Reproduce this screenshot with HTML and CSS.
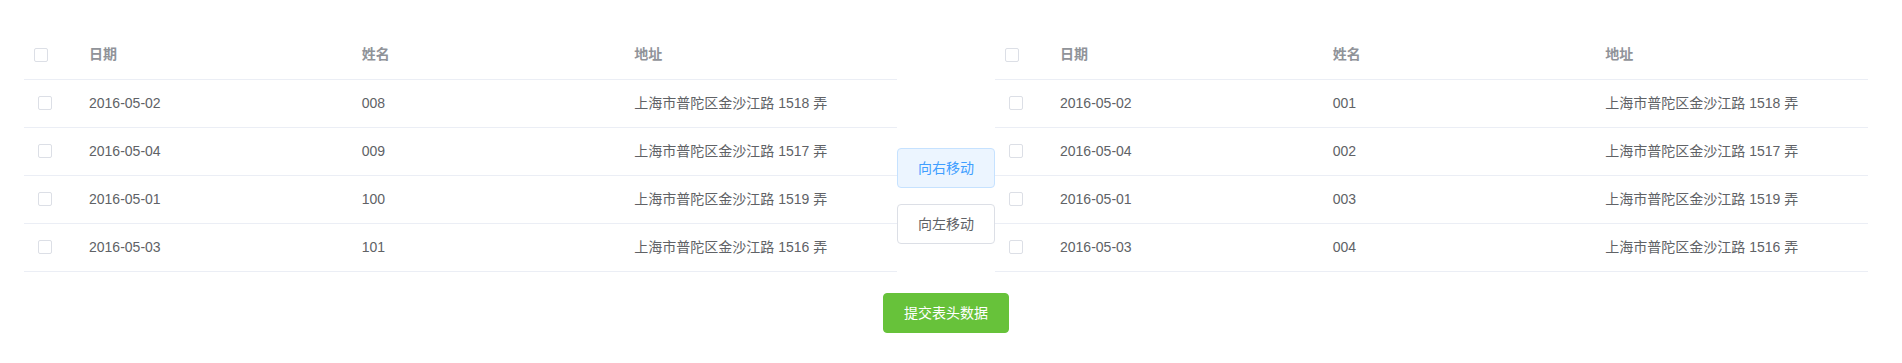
FILE: index.html
```html
<!DOCTYPE html>
<html lang="zh-CN">
<head>
<meta charset="utf-8">
<title>表格穿梭</title>
<link rel="stylesheet" href="styles.css">
</head>
<body>
<div class="page">
  <div class="transfer">
    <div class="pane">
      <table class="grid">
        <colgroup><col class="c-sel"><col class="c-col"><col class="c-col"><col class="c-col"></colgroup>
        <thead>
          <tr><th class="sel"><span class="cb"></span></th><th>日期</th><th>姓名</th><th>地址</th></tr>
        </thead>
        <tbody>
          <tr><td class="sel"><span class="cb"></span></td><td>2016-05-02</td><td>008</td><td>上海市普陀区金沙江路 1518 弄</td></tr>
          <tr><td class="sel"><span class="cb"></span></td><td>2016-05-04</td><td>009</td><td>上海市普陀区金沙江路 1517 弄</td></tr>
          <tr><td class="sel"><span class="cb"></span></td><td>2016-05-01</td><td>100</td><td>上海市普陀区金沙江路 1519 弄</td></tr>
          <tr><td class="sel"><span class="cb"></span></td><td>2016-05-03</td><td>101</td><td>上海市普陀区金沙江路 1516 弄</td></tr>
        </tbody>
      </table>
    </div>
    <div class="ops">
      <button class="btn btn-active">向右移动</button>
      <button class="btn">向左移动</button>
    </div>
    <div class="pane">
      <table class="grid">
        <colgroup><col class="c-sel"><col class="c-col"><col class="c-col"><col class="c-col"></colgroup>
        <thead>
          <tr><th class="sel"><span class="cb"></span></th><th>日期</th><th>姓名</th><th>地址</th></tr>
        </thead>
        <tbody>
          <tr><td class="sel"><span class="cb"></span></td><td>2016-05-02</td><td>001</td><td>上海市普陀区金沙江路 1518 弄</td></tr>
          <tr><td class="sel"><span class="cb"></span></td><td>2016-05-04</td><td>002</td><td>上海市普陀区金沙江路 1517 弄</td></tr>
          <tr><td class="sel"><span class="cb"></span></td><td>2016-05-01</td><td>003</td><td>上海市普陀区金沙江路 1519 弄</td></tr>
          <tr><td class="sel"><span class="cb"></span></td><td>2016-05-03</td><td>004</td><td>上海市普陀区金沙江路 1516 弄</td></tr>
        </tbody>
      </table>
    </div>
  </div>
  <div class="footer">
    <button class="btn btn-success">提交表头数据</button>
  </div>
</div>
</body>
</html>
```

FILE: styles.css
```css
* { box-sizing: border-box; }
html, body { margin: 0; padding: 0; background: #fff; }
body {
  font-family: "Liberation Sans", "Noto Sans CJK SC", sans-serif;
  font-size: 14px;
  color: #606266;
}
.page {
  padding: 31px 34px 0 24px;
}
.transfer {
  display: flex;
  align-items: flex-start;
}
.pane {
  flex: 1 1 0;
  min-width: 0;
}
.grid {
  width: 100%;
  border-collapse: collapse;
  table-layout: fixed;
}
.grid .c-sel { width: 55px; }
.grid .c-col { width: calc((100% - 55px) / 3); }
.grid th, .grid td {
  height: 48px;
  padding: 0 10px;
  text-align: left;
  vertical-align: middle;
  border-bottom: 1px solid #ebeef5;
  white-space: nowrap;
  line-height: 23px;
}
.grid th {
  color: #909399;
  font-weight: 600;
}
.grid td { color: #606266; }
.grid td.sel { padding-left: 14px; }
.grid th.sel { padding-left: 10px; }
.cb {
  display: block;
  width: 14px;
  height: 14px;
  border: 1px solid #dcdfe6;
  border-radius: 2px;
  background: #fff;
}
.ops {
  flex: 0 0 98px;
  display: flex;
  flex-direction: column;
  gap: 16px;
  padding-top: 117px;
}
.btn {
  display: block;
  height: 40px;
  padding: 0 20px;
  font-family: inherit;
  font-size: 14px;
  line-height: 38px;
  border: 1px solid #dcdfe6;
  border-radius: 4px;
  background: #fff;
  color: #606266;
  white-space: nowrap;
}
.ops .btn { width: 98px; padding: 0; text-align: center; }
.btn-active {
  background: #ecf5ff;
  border-color: #c6e2ff;
  color: #409eff;
}
.footer {
  display: flex;
  justify-content: center;
  padding-top: 21px;
}
.btn-success {
  width: 126px;
  padding: 0;
  text-align: center;
  background: #67c23a;
  border-color: #67c23a;
  color: #fff;
}
```
